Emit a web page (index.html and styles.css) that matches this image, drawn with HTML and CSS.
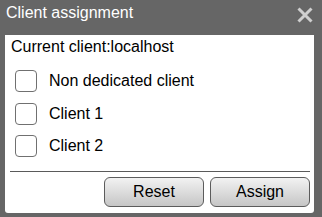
FILE: index.html
```html
<!DOCTYPE html>
<html>
<head>
<meta charset="utf-8">
<link rel="stylesheet" href="styles.css">
</head>
<body>
<div class="dialog">
  <div class="titlebar">
    <span class="title">Client assignment</span>
    <svg class="close" width="16" height="16" viewBox="0 0 16 16"><path d="M1.5 1.5L14.5 14.5M14.5 1.5L1.5 14.5" stroke="#cfcfcf" stroke-width="3" fill="none"/></svg>
  </div>
  <div class="panel">
    <div class="current">Current client:localhost</div>
    <div class="list">
      <label class="row"><input type="checkbox" class="cb"><span>Non dedicated client</span></label>
      <label class="row"><input type="checkbox" class="cb"><span>Client 1</span></label>
      <label class="row"><input type="checkbox" class="cb"><span>Client 2</span></label>
    </div>
    <div class="footer">
      <button class="btn reset">Reset</button>
      <button class="btn assign">Assign</button>
    </div>
  </div>
</div>
</body>
</html>
```
FILE: styles.css
```css
html, body {
  margin: 0;
  padding: 0;
  background: #666666;
}
body {
  font-family: "Liberation Sans", Arial, sans-serif;
  font-size: 16px;
  color: #000;
}
.dialog {
  width: 322px;
  height: 217px;
  display: flex;
  flex-direction: column;
  background: #666666;
}
.titlebar {
  height: 35px;
  box-sizing: border-box;
  display: flex;
  justify-content: space-between;
  align-items: flex-start;
  padding: 4px 9px 0 6px;
}
.title {
  color: #ffffff;
  line-height: 18px;
}
.close {
  margin-top: 3px;
}
.panel {
  margin: 0 8px 4px 5px;
  flex: 1;
  background: #ffffff;
  border-radius: 0 0 3px 3px;
  display: flex;
  flex-direction: column;
  padding: 3px 4px 6px 5px;
}
.current {
  padding-left: 1px;
  line-height: 18px;
}
.list {
  display: flex;
  flex-direction: column;
  gap: 10px;
  margin-top: 14px;
  padding-left: 5px;
}
.row {
  display: flex;
  align-items: center;
  gap: 12px;
  height: 22px;
}
.row:nth-child(2) {
  margin-top: 1px;
}
.cb {
  appearance: none;
  -webkit-appearance: none;
  margin: 0;
  width: 22px;
  height: 22px;
  box-sizing: border-box;
  border: 1px solid #707070;
  border-radius: 4px;
  background: #fff;
}
.footer {
  margin-top: auto;
  border-top: 1px solid #5a5a5a;
  padding-top: 5px;
  display: flex;
  justify-content: flex-end;
  gap: 6px;
}
.btn {
  font-family: "Liberation Sans", Arial, sans-serif;
  font-size: 16px;
  color: #000;
  height: 30px;
  border: 1px solid #5c5c5c;
  border-radius: 6px;
  background: linear-gradient(#f2f2f2, #c6c6c6);
  padding: 0;
}
.reset { width: 100px; }
.assign { width: 100px; }
```
